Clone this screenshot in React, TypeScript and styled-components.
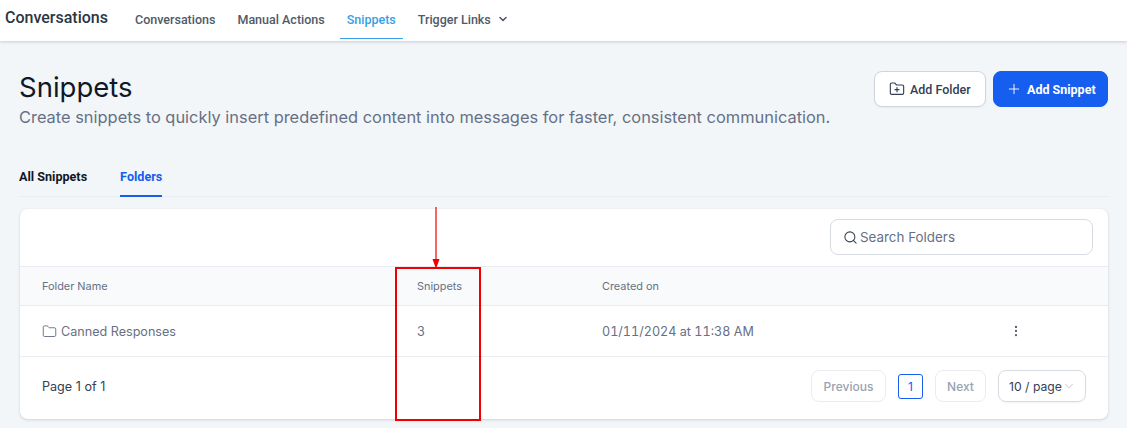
import styled, { createGlobalStyle } from 'styled-components';
import { ChevronDown, EllipsisVertical, Folder, FolderPlus, Plus, Search } from 'lucide-react';

const GlobalStyle = createGlobalStyle`
  html, body {
    margin: 0;
    padding: 0;
    background: #f2f6f9;
    overflow: hidden;
  }
  * {
    box-sizing: border-box;
  }
  body {
    font-family: Inter, "Liberation Sans", sans-serif;
  }
`;

const navItems = ['Conversations', 'Manual Actions', 'Snippets', 'Trigger Links'];

const App = () => {
  return (
    <Page>
      <GlobalStyle />
      <TopBar>
        <Brand>Conversations</Brand>
        <TopNav>
          {navItems.map((item) => (
            <NavItem key={item} $active={item === 'Snippets'}>
              {item}
              {item === 'Trigger Links' && <ChevronDown size={12} strokeWidth={3.2} />}
            </NavItem>
          ))}
        </TopNav>
      </TopBar>

      <Content>
        <TitleRow>
          <div>
            <Title>Snippets</Title>
            <Subtitle>
              Create snippets to quickly insert predefined content into messages for faster,
              consistent communication.
            </Subtitle>
          </div>
          <Actions>
            <OutlineButton>
              <FolderPlus size={16} strokeWidth={1.7} />
              Add Folder
            </OutlineButton>
            <PrimaryButton>
              <Plus size={16} strokeWidth={1.4} />
              Add Snippet
            </PrimaryButton>
          </Actions>
        </TitleRow>

        <Tabs>
          <Tab>All Snippets</Tab>
          <Tab $active>Folders</Tab>
        </Tabs>

        <Card>
          <CardToolbar>
            <SearchBox>
              <Search size={15} strokeWidth={1.7} color="#374151" />
              <span>Search Folders</span>
            </SearchBox>
          </CardToolbar>
          <HeadRow>
            <HeadCell>Folder Name</HeadCell>
            <HeadCell>Snippets</HeadCell>
            <HeadCell>Created on</HeadCell>
          </HeadRow>
          <BodyRow>
            <NameCell>
              <Folder size={15} strokeWidth={1.5} />
              Canned Responses
            </NameCell>
            <BodyCell>3</BodyCell>
            <DateCell>01/11/2024 at 11:38 AM</DateCell>
            <MoreCell>
              <EllipsisVertical size={14} strokeWidth={2} />
            </MoreCell>
          </BodyRow>
          <Footer>
            <PageLabel>Page 1 of 1</PageLabel>
            <Pager>
              <PagerButton $width={75}>Previous</PagerButton>
              <PageNumber>1</PageNumber>
              <PagerButton $width={51}>Next</PagerButton>
              <PageSize>
                10 / page
                <ChevronDown size={14} strokeWidth={1} color="#9ca3af" />
              </PageSize>
            </Pager>
          </Footer>
        </Card>
      </Content>

      <ArrowMark width="12" height="62" viewBox="0 0 12 62">
        <line x1="6" y1="0" x2="6" y2="54" stroke="#f00000" strokeWidth="1.2" />
        <polygon points="2.5,52 9.5,52 6,62" fill="#f00000" />
      </ArrowMark>
      <HighlightBox />
    </Page>
  );
};

export default App;

const Page = styled.div`
  position: relative;
  width: 1127px;
  height: 428px;
  overflow: hidden;
  background: #f2f6f9;
`;

const TopBar = styled.header`
  display: flex;
  align-items: stretch;
  height: 41px;
  padding-left: 5px;
  background: #fff;
  box-shadow: 0 1px 3px rgba(16, 24, 40, 0.18);
`;

const Brand = styled.div`
  margin-top: 8px;
  width: 123px;
  font-family: Roboto, sans-serif;
  font-size: 16px;
  line-height: 19px;
  font-weight: 500;
  color: #2c3542;
`;

const TopNav = styled.nav`
  display: flex;
  gap: 8px;
`;

const NavItem = styled.div<{ $active?: boolean }>`
  display: flex;
  align-items: flex-start;
  gap: 6px;
  height: 39px;
  padding: 12px 7px 0;
  border-bottom: 1px solid ${(p) => (p.$active ? '#38a0e6' : 'transparent')};
  font-family: Roboto, sans-serif;
  font-size: 12.5px;
  line-height: 15px;
  font-weight: 500;
  color: ${(p) => (p.$active ? '#38a0e6' : '#4f5a69')};

  svg {
    margin-top: 1px;
  }
`;

const Content = styled.main`
  padding: 0 19px;
`;

const TitleRow = styled.section`
  display: flex;
  justify-content: space-between;
  align-items: flex-start;
  padding-top: 30px;
`;

const Title = styled.h1`
  margin: 0;
  font-size: 27.5px;
  line-height: 33px;
  font-weight: 400;
  color: #101828;
`;

const Subtitle = styled.p`
  margin: 1px 0 0;
  font-size: 16.42px;
  line-height: 24px;
  color: #667085;
`;

const Actions = styled.div`
  display: flex;
  gap: 7px;
`;

const OutlineButton = styled.button`
  display: flex;
  align-items: center;
  gap: 5px;
  width: 112px;
  height: 36px;
  padding: 0 0 0 14px;
  border: 1px solid #d0d5dd;
  border-radius: 8px;
  background: #fff;
  box-shadow: 0 1px 2px rgba(16, 24, 40, 0.05);
  font-family: Roboto, sans-serif;
  font-size: 12.5px;
  font-weight: 500;
  color: #344054;
`;

const PrimaryButton = styled.button`
  display: flex;
  align-items: center;
  gap: 5px;
  width: 115px;
  height: 36px;
  padding: 0 0 0 12px;
  border: 1px solid #155eef;
  border-radius: 8px;
  background: #155eef;
  font-family: Roboto, sans-serif;
  font-size: 12.5px;
  font-weight: 700;
  color: #fff;
`;

const Tabs = styled.div`
  display: flex;
  gap: 33px;
  margin-top: 28px;
  height: 40px;
  border-bottom: 1px solid #e9edf1;
`;

const Tab = styled.div<{ $active?: boolean }>`
  height: 40px;
  padding-top: 12px;
  border-bottom: 2px solid ${(p) => (p.$active ? '#155eef' : 'transparent')};
  font-family: Roboto, sans-serif;
  font-size: 12.6px;
  line-height: 16px;
  font-weight: 700;
  color: ${(p) => (p.$active ? '#155eef' : '#101828')};
`;

const Card = styled.section`
  margin: 12px 0 0 1px;
  height: 210px;
  border-radius: 8px;
  background: #fff;
  box-shadow: 0 1px 3px rgba(16, 24, 40, 0.16);
  overflow: hidden;
`;

const CardToolbar = styled.div`
  display: flex;
  justify-content: flex-end;
  height: 57px;
  padding: 10px 15px 0 0;
`;

const SearchBox = styled.div`
  display: flex;
  align-items: center;
  gap: 2px;
  width: 263px;
  height: 36px;
  padding-left: 12px;
  border: 1px solid #d7dce3;
  border-radius: 8px;
  font-size: 13.4px;
  color: #667085;
`;

const rowColumns = '375px 185px 1fr 46px';

const HeadRow = styled.div`
  display: grid;
  grid-template-columns: ${rowColumns};
  align-items: center;
  height: 40px;
  padding-left: 22px;
  border-top: 1px solid #e9ebf0;
  border-bottom: 1px solid #e9ebf0;
  background: #f9fafb;
`;

const HeadCell = styled.div`
  font-size: 10.9px;
  font-weight: 400;
  color: #667085;
`;

const BodyRow = styled.div`
  display: grid;
  grid-template-columns: ${rowColumns};
  align-items: center;
  height: 51px;
  padding: 0 53px 0 22px;
  border-bottom: 1px solid #e9ebf0;
`;

const BodyCell = styled.div`
  font-size: 12.6px;
  color: #667085;
`;

const DateCell = styled(BodyCell)`
  font-variant-numeric: tabular-nums;
`;

const NameCell = styled(BodyCell)`
  display: flex;
  align-items: center;
  gap: 4px;
`;

const MoreCell = styled.div`
  display: flex;
  color: #5b6576;
`;

const Footer = styled.div`
  display: flex;
  justify-content: space-between;
  align-items: center;
  height: 58px;
  padding: 0 22px;
`;

const PageLabel = styled.div`
  font-size: 12.6px;
  color: #344054;
`;

const Pager = styled.div`
  display: flex;
  align-items: center;
`;

const PagerButton = styled.button<{ $width: number }>`
  width: ${(p) => p.$width}px;
  height: 32px;
  padding: 0;
  border: 1px solid #eaecf0;
  border-radius: 8px;
  background: #fff;
  font-family: Inter, sans-serif;
  font-size: 12px;
  font-weight: 500;
  color: #98a2b3;
`;

const PageNumber = styled.div`
  display: flex;
  align-items: center;
  justify-content: center;
  width: 25px;
  height: 25px;
  margin: 0 12px;
  border: 1px solid #155eef;
  border-radius: 3px;
  font-size: 12px;
  color: #155eef;
`;

const PageSize = styled.div`
  display: flex;
  align-items: center;
  justify-content: space-between;
  width: 88px;
  height: 32px;
  margin-left: 12px;
  padding: 0 9px 0 10px;
  border: 1px solid #d7dce3;
  border-radius: 8px;
  box-shadow: 0 1px 2px rgba(16, 24, 40, 0.05);
  font-size: 12.2px;
  white-space: nowrap;
  color: #344054;
`;

const ArrowMark = styled.svg`
  position: absolute;
  left: 430px;
  top: 207px;
`;

const HighlightBox = styled.div`
  position: absolute;
  left: 395px;
  top: 267px;
  width: 86px;
  height: 154px;
  border: 2px solid #f00000;
`;
